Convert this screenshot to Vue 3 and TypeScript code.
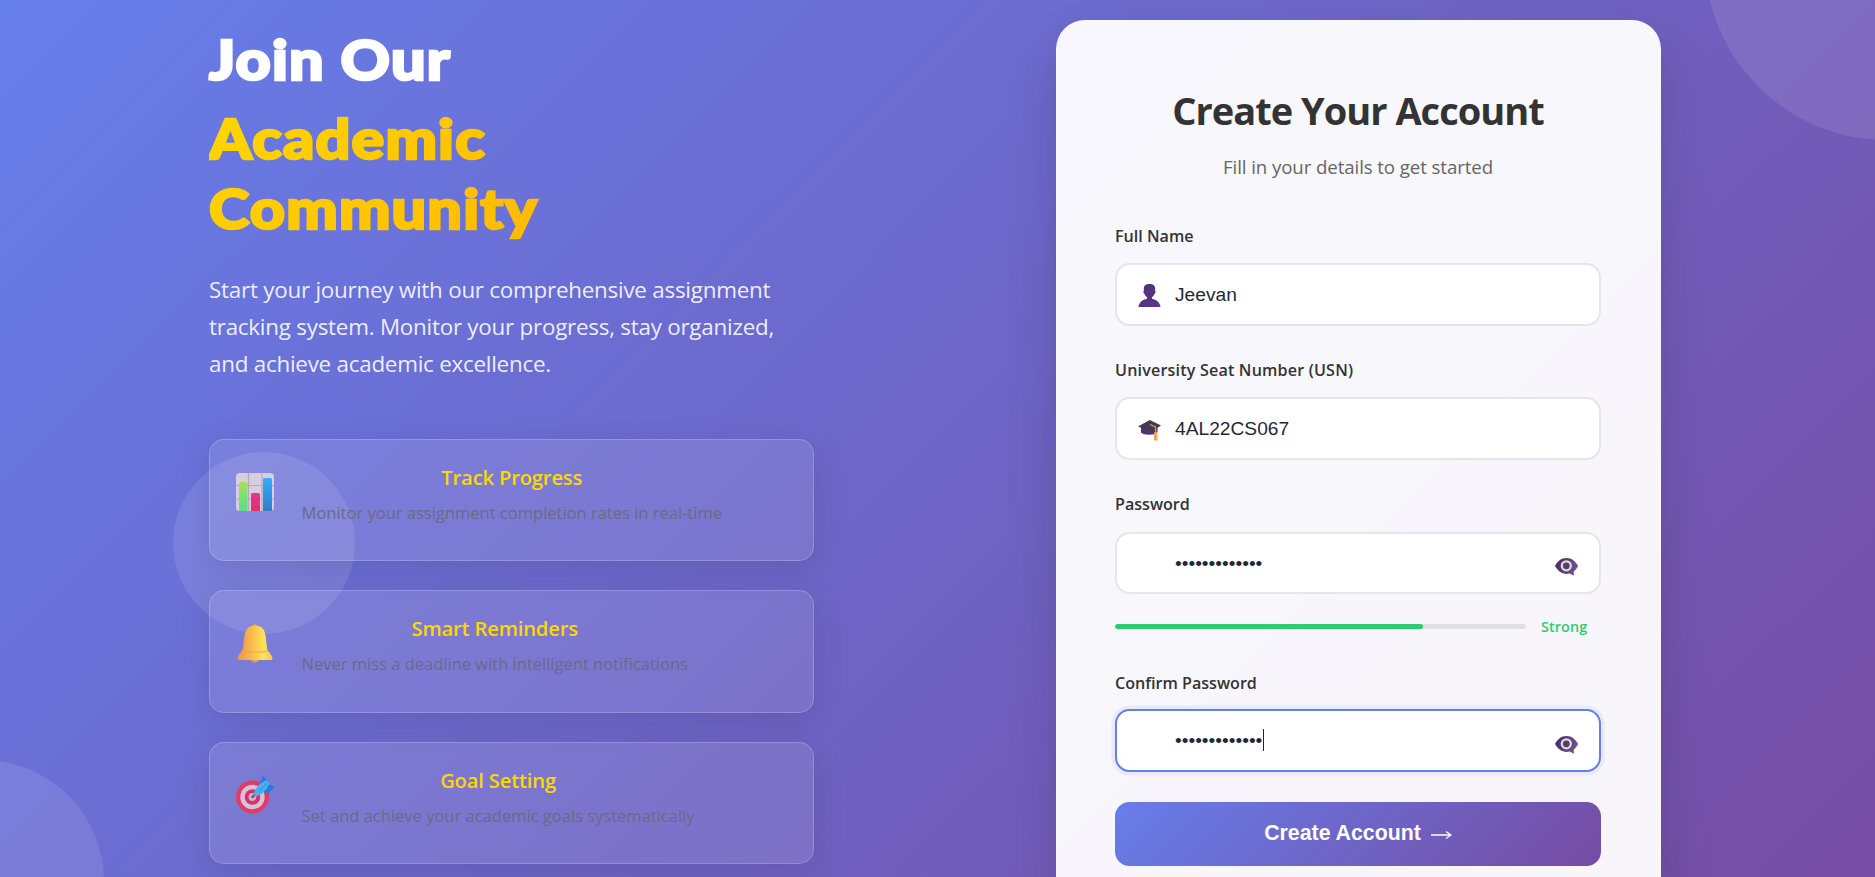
<script setup lang="ts">
import { ref } from 'vue'

interface Feature {
  icon: 'chart' | 'bell' | 'target'
  title: string
  text: string
}

const features: Feature[] = [
  { icon: 'chart', title: 'Track Progress', text: 'Monitor your assignment completion rates in real-time' },
  { icon: 'bell', title: 'Smart Reminders', text: 'Never miss a deadline with intelligent notifications' },
  { icon: 'target', title: 'Goal Setting', text: 'Set and achieve your academic goals systematically' },
]

const fullName = ref('Jeevan')
const usn = ref('4AL22CS067')
const password = ref('assignment123')
const confirmPassword = ref('assignment123')
const strength = ref(75)
</script>

<template>
  <div class="page">
    <div class="circle circle-top"></div>
    <div class="circle circle-mid"></div>
    <div class="circle circle-bottom"></div>

    <svg class="defs" width="0" height="0" aria-hidden="true">
      <defs>
        <linearGradient id="barGreen" x1="0" y1="0" x2="0" y2="1">
          <stop offset="0" stop-color="#a9e05c" /><stop offset="1" stop-color="#52e08c" />
        </linearGradient>
        <linearGradient id="barRed" x1="0" y1="0" x2="0" y2="1">
          <stop offset="0" stop-color="#ec3090" /><stop offset="1" stop-color="#dc3560" />
        </linearGradient>
        <linearGradient id="barBlue" x1="0" y1="0" x2="0" y2="1">
          <stop offset="0" stop-color="#2fb0f8" /><stop offset="1" stop-color="#3479cc" />
        </linearGradient>
        <linearGradient id="bellFill" x1="0" y1="0" x2="1" y2="0">
          <stop offset="0" stop-color="#ea9050" /><stop offset="0.45" stop-color="#fbc04c" /><stop offset="0.75" stop-color="#ffe25c" /><stop offset="1" stop-color="#f8c34e" />
        </linearGradient>
        <linearGradient id="personFill" x1="0" y1="0" x2="1" y2="1">
          <stop offset="0" stop-color="#4a3070" /><stop offset="1" stop-color="#60368f" />
        </linearGradient>
        <linearGradient id="eyeFill" x1="0" y1="0" x2="1" y2="0.3">
          <stop offset="0" stop-color="#482763" /><stop offset="1" stop-color="#70508c" />
        </linearGradient>
      </defs>
    </svg>

    <main class="layout">
      <section class="intro">
        <h1>
          <span class="white">Join Our</span>
          <span class="gold">Academic<br />Community</span>
        </h1>
        <p class="lead">
          Start your journey with our comprehensive assignment<br />
          tracking system. Monitor your progress, stay organized,<br />
          and achieve academic excellence.
        </p>
        <div class="features">
          <article v-for="f in features" :key="f.icon" class="feature">
            <svg v-if="f.icon === 'chart'" class="f-icon" viewBox="0 0 38 38">
              <rect width="38" height="38" rx="4" fill="#d6cfe0" />
              <path d="M12.5 0v38M26 0v38M0 12.5h38M0 26h38" stroke="#b3a9bf" stroke-width="1.2" />
              <path d="M3 10.500a1.500 1.500 0 0 1 1.500-1.500h5.500a1.500 1.500 0 0 1 1.500 1.500v27.500h-8.500z" fill="url(#barGreen)" />
              <path d="M15 21.500a1.500 1.500 0 0 1 1.500-1.500h6a1.500 1.500 0 0 1 1.500 1.500v16.500h-9z" fill="url(#barRed)" />
              <path d="M27 6.500a1.500 1.500 0 0 1 1.500-1.500h6a1.500 1.500 0 0 1 1.500 1.500v31.500h-9z" fill="url(#barBlue)" />
            </svg>
            <svg v-else-if="f.icon === 'bell'" class="f-icon" viewBox="0 0 38 38">
              <circle cx="19" cy="1.200" r="1.700" fill="#e89a3c" />
              <circle cx="19" cy="35" r="3.600" fill="#ee9a4e" />
              <path d="M19 1.500c-6.500 0-9.800 4-10.600 10.500l-1.500 12.500c-.5 3.500-5.200 6-5.400 10 0 1 .4 1.500 1.400 1.500h32.200c1 0 1.400-.5 1.400-1.500-.2-4-4.900-6.500-5.400-10l-1.500-12.500c-.8-6.500-4.100-10.500-10.600-10.500z" fill="url(#bellFill)" />
              <path d="M6 26.800c7 2 19 2 26 0" fill="none" stroke="#ee9f3c" stroke-width="1.300" opacity=".6" />
            </svg>
            <svg v-else class="f-icon" viewBox="0 0 38 38">
              <circle cx="16.500" cy="21" r="16.500" fill="#e23c64" />
              <circle cx="16.500" cy="21" r="12.200" fill="#d3c4dd" />
              <circle cx="16.500" cy="21" r="7.800" fill="#de2f66" />
              <circle cx="16.500" cy="21" r="3.900" fill="#cbb9cf" />
              <path d="M16.500 21l4.500-4.500" stroke="#735d83" stroke-width="2.500" stroke-linecap="round" />
              <path d="M24 8l2.500-8.500 6 6-3 7zM28 11.500l5.500-3 5 2.500-5.500 6-6-1z" fill="#237be3" />
              <path d="M18 17.500c0-5 7-11 12.500-13.500l3 3.500c-3 6-8 12.500-13.500 12.500-1.500 0-2-1-2-2.500z" fill="#46b2ee" />
              <path d="M23.500 15l7.500-8" stroke="#2389e2" stroke-width="1" />
            </svg>
            <div class="f-body">
              <h3>{{ f.title }}</h3>
              <p>{{ f.text }}</p>
            </div>
          </article>
        </div>
      </section>

      <section class="card">
        <h2>Create Your Account</h2>
        <p class="sub">Fill in your details to get started</p>

        <form @submit.prevent>
          <div class="field">
            <label>Full Name</label>
            <div class="control">
              <svg class="lead-icon" viewBox="0 0 23 23">
                <path d="M11.500 0c-4 0-5.700 1.600-5.700 5 0 .7 0 1.400.1 2-1 .2-.6 2.500.6 2.800.5 1.700 1.400 2.700 2.500 3.500v1.500c-4.500.8-8 3.700-8.500 8.200h22c-.5-4.500-4-7.400-8.500-8.200v-1.500c1.100-.8 2-1.800 2.500-3.500 1.200-.3 1.600-2.600.6-2.800.1-.6.1-1.300.1-2 0-3.400-1.700-5-5.700-5z" fill="url(#personFill)" />
              </svg>
              <input v-model="fullName" type="text" />
            </div>
          </div>

          <div class="field">
            <label class="wide">University Seat Number (USN)</label>
            <div class="control">
              <svg class="lead-icon" viewBox="0 0 23 23">
                <path d="M3 8v6.500c2.500 3 14 3 16.500 0V8z" fill="#51316f" />
                <path d="M0 8.500l11.800-6.500 11.200 5.500-10 6.500z" fill="#433a4e" />
                <path d="M12 6.500l5.500 2.500v6" fill="none" stroke="#e89a35" stroke-width="1.300" />
                <path d="M16.300 14h2.700l.4 8.500h-3.600z" fill="#fa9d57" />
              </svg>
              <input v-model="usn" type="text" />
            </div>
          </div>

          <div class="field pw">
            <label>Password</label>
            <div class="control">
              <input v-model="password" type="password" />
              <svg class="eye" viewBox="0 0 23 18">
                <path d="M11.500 0c5.500 0 9 3.500 11.500 8-1 2.300-2.500 4.200-4.300 5.500l.1 4.200-4-2.200c-6.300 1.500-11.300-1.500-14.800-7.500 2.500-4.500 6-8 11.500-8z" fill="url(#eyeFill)" />
                <circle cx="11.300" cy="7.800" r="4.500" fill="#52405f" stroke="#ddd6e2" stroke-width="2.300" />
              </svg>
            </div>
            <div class="strength">
              <div class="track"><div class="fill" :style="{ width: strength + '%' }"></div></div>
              <span>Strong</span>
            </div>
          </div>

          <div class="field confirm">
            <label>Confirm Password</label>
            <div class="control focused">
              <input v-model="confirmPassword" type="password" />
              <i class="caret"></i>
              <svg class="eye" viewBox="0 0 23 18">
                <path d="M11.500 0c5.500 0 9 3.500 11.500 8-1 2.300-2.500 4.200-4.300 5.500l.1 4.200-4-2.200c-6.300 1.500-11.300-1.500-14.800-7.500 2.500-4.500 6-8 11.500-8z" fill="url(#eyeFill)" />
                <circle cx="11.300" cy="7.800" r="4.500" fill="#52405f" stroke="#ddd6e2" stroke-width="2.300" />
              </svg>
            </div>
          </div>

          <button type="submit">
            <span>Create Account</span>
            <svg width="21" height="10" viewBox="0 0 21 10" fill="none" stroke="#fff" stroke-width="1.300">
              <path d="M0 5h20M15 1.500l5 3.500-5 3.500" />
            </svg>
          </button>
        </form>
      </section>
    </main>
  </div>
</template>

<style>
html,
body {
  margin: 0;
  overflow: hidden;
}
</style>

<style scoped>
.page {
  position: relative;
  height: 877px;
  overflow: hidden;
  background: linear-gradient(135deg, #667eea 0%, #764ba2 100%) 0 0 / 100% 960px no-repeat;
  font-family: "Open Sans", "Noto Sans", sans-serif;
}
.page * {
  box-sizing: border-box;
}
.defs {
  position: absolute;
}
.circle {
  position: absolute;
  border-radius: 50%;
  background: rgba(255, 255, 255, 0.1);
}
.circle-top {
  width: 364px;
  height: 364px;
  left: 1705px;
  top: -224px;
}
.circle-mid {
  width: 182px;
  height: 182px;
  left: 173px;
  top: 452px;
}
.circle-bottom {
  width: 243px;
  height: 243px;
  left: -139px;
  top: 760px;
}
.layout {
  position: relative;
  display: flex;
  justify-content: space-between;
  align-items: flex-start;
  width: 1452px;
  margin-left: 209px;
}
.intro {
  width: 605px;
  padding-top: 24px;
}
h1 {
  margin: 0;
  font-family: Lato, "Open Sans", sans-serif;
  font-size: 56px;
  font-weight: 900;
  line-height: 70px;
  letter-spacing: 1.1px;
  -webkit-text-stroke-width: 2.6px;
  transform: scaleX(1.09);
  transform-origin: left;
}
h1 span {
  display: block;
}
.white {
  color: #fff;
}
.gold {
  margin-top: 9px;
  background: linear-gradient(135deg, #ffd700, #ffa500);
  -webkit-background-clip: text;
  background-clip: text;
  color: transparent;
}
.lead {
  margin: 27.500px 0 0;
  font-size: 22.4px;
  line-height: 37px;
  letter-spacing: -0.24px;
  white-space: nowrap;
  color: rgba(255, 255, 255, 0.9);
}
.features {
  display: grid;
  gap: 29px;
  margin-top: 57.500px;
}
.feature {
  display: flex;
  align-items: flex-start;
  height: 122.400px;
  padding: 25px 26px;
  border: 1px solid rgba(255, 255, 255, 0.2);
  border-radius: 15px;
  background: rgba(255, 255, 255, 0.1);
  box-shadow: 0 8px 32px rgba(0, 0, 0, 0.1);
}
.f-icon {
  width: 38px;
  height: 38px;
  margin-top: 8px;
  flex: none;
  overflow: visible;
}
.f-body {
  margin-left: 27.500px;
  text-align: center;
}
h3 {
  margin: 0 0 10px;
  font-size: 20.2px;
  font-weight: 600;
  line-height: 25px;
  letter-spacing: -0.18px;
  color: #ffd700;
}
.f-body p {
  margin: 0;
  font-size: 16.6px;
  line-height: 26px;
  letter-spacing: -0.04px;
  color: #6b6a86;
}
.card {
  width: 605px;
  height: 980px;
  margin-top: 20px;
  padding: 62.500px 60px 0 59px;
  border-radius: 29px;
  background: rgba(255, 255, 255, 0.95);
  box-shadow: 0 25px 50px rgba(0, 0, 0, 0.15);
}
h2 {
  margin: 0;
  font-size: 38px;
  font-weight: 700;
  line-height: 54px;
  letter-spacing: -1px;
  text-align: center;
  color: #333;
}
.sub {
  margin: 15px 0 0;
  font-size: 18.7px;
  line-height: 30px;
  letter-spacing: -0.1px;
  text-align: center;
  color: #666;
}
.field {
  height: 134px;
}
form {
  padding-top: 44.500px;
}
label {
  display: block;
  height: 37px;
  font-size: 16.1px;
  font-weight: 600;
  line-height: 21px;
  color: #333;
}
label.wide {
  letter-spacing: 0.18px;
}
.control {
  position: relative;
  height: 62.500px;
}
input {
  display: block;
  width: 100%;
  height: 100%;
  padding: 2px 58px 0;
  border: 2px solid #e5e6ea;
  border-radius: 14.500px;
  outline: none;
  background: #fff;
  font-family: "Liberation Sans", Arial, sans-serif;
  font-size: 19.2px;
  color: #1f2937;
}
.focused input {
  border-color: #667eea;
  box-shadow: 0 0 0 3.600px rgba(102, 126, 234, 0.1);
}
.lead-icon {
  position: absolute;
  left: 23px;
  top: 21px;
  width: 23px;
  height: 23px;
}
.eye {
  position: absolute;
  right: 23px;
  top: 26px;
  width: 23px;
  height: 18px;
}
.focused .eye {
  top: 27px;
}
.caret {
  position: absolute;
  left: 148px;
  top: 20px;
  width: 1px;
  height: 22px;
  background: #1f2937;
}
.pw {
  height: 179px;
}
.pw label {
  height: 37.500px;
}
.strength {
  display: flex;
  align-items: center;
  gap: 15px;
  height: 20px;
  margin-top: 22px;
}
.track {
  width: 411px;
  height: 5px;
  border-radius: 3px;
  overflow: hidden;
  background: #e0e0e0;
}
.fill {
  height: 100%;
  border-radius: 3px;
  background: #2ecc71;
}
.strength span {
  padding-top: 1px;
  font-size: 14.4px;
  font-weight: 600;
  line-height: 20px;
  letter-spacing: 0.1px;
  color: #2ecc71;
}
.confirm {
  height: 129px;
}
.confirm label {
  height: 36px;
}
button {
  display: flex;
  align-items: center;
  justify-content: center;
  gap: 10px;
  width: 100%;
  height: 64px;
  padding: 0 0 2px;
  border: 0;
  border-radius: 14.500px;
  background: linear-gradient(135deg, #667eea 0%, #764ba2 100%);
  font-family: "Liberation Sans", Arial, sans-serif;
  font-size: 21.3px;
  font-weight: 700;
  color: #fff;
}
button svg {
  margin-top: 3px;
}
</style>
